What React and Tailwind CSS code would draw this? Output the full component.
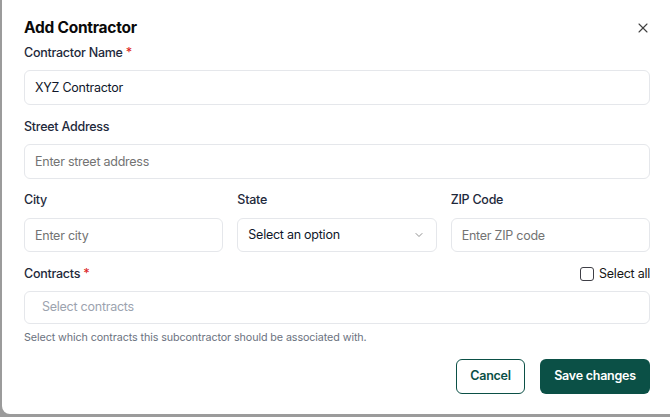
import { X, ChevronDown } from 'lucide-react';

const labelCls = 'block text-[12.5px] leading-5 font-medium tracking-[-0.25px] text-[#1e293b]';
const inputCls =
  'w-full rounded-md border border-[#e5e7eb] bg-white px-[10px] text-[12.5px] tracking-[-0.25px] text-[#0f172a] placeholder:text-[#737373] outline-none';

function Label({ children, required }) {
  return (
    <label className={labelCls}>
      {children}
      {required && <span className="text-[#dc2626]"> *</span>}
    </label>
  );
}

export default function App() {
  return (
    <div
      className="w-[670px] h-[417px] overflow-hidden bg-[#9b9b9b] pl-[2px]"
      style={{ fontFamily: 'Inter, "Noto Sans", sans-serif' }}
    >
      <div className="w-[668px] h-[414px] bg-white rounded-bl-lg pl-[22px] pr-[20px] pt-[14px]">
        {/* header */}
        <div className="flex items-center justify-between">
          <h2 className="text-[15.5px] leading-7 font-bold tracking-[-0.25px] text-[#0a0a0a]">Add Contractor</h2>
          <button className="mr-[-1px] text-[#404040]">
            <X size={16} strokeWidth={1.6} />
          </button>
        </div>

        {/* name */}
        <div className="mt-[1px]">
          <Label required>Contractor Name</Label>
          <input className={`${inputCls} mt-[7px] h-[35px]`} defaultValue="XYZ Contractor" />
        </div>

        {/* street */}
        <div className="mt-[12px]">
          <Label>Street Address</Label>
          <input className={`${inputCls} mt-[7px] h-[35px]`} placeholder="Enter street address" />
        </div>

        {/* city / state / zip */}
        <div className="mt-[11px] grid grid-cols-3 gap-x-[14px]">
          <div>
            <Label>City</Label>
            <input className={`${inputCls} mt-[8px] h-[34px]`} placeholder="Enter city" />
          </div>
          <div>
            <Label>State</Label>
            <div className="mt-[8px] h-[34px] rounded-md border border-[#e5e7eb] flex items-center justify-between pl-[10px] pr-[11px] text-[12.5px] tracking-[-0.25px] text-[#0f172a]">
              <span>Select an option</span>
              <ChevronDown size={12} strokeWidth={1.6} className="text-[#737373]" />
            </div>
          </div>
          <div>
            <Label>ZIP Code</Label>
            <input className={`${inputCls} mt-[8px] h-[34px]`} placeholder="Enter ZIP code" />
          </div>
        </div>

        {/* contracts */}
        <div className="mt-[12px]">
          <div className="flex items-center justify-between">
            <Label required>Contracts</Label>
            <label className="flex items-center gap-[5px] text-[12.5px] leading-5 tracking-[-0.25px] text-[#171717]">
              <span className="w-[14px] h-[14px] rounded-[3px] border border-[#3f3f46] bg-white" />
              Select all
            </label>
          </div>
          <div className="mt-[7px] h-[33px] rounded-md border border-[#e5e7eb] flex items-center pl-[17px] text-[12.5px] tracking-[-0.25px] text-[#9ca3af]">
            Select contracts
          </div>
          <p className="mt-[6px] text-[10.75px] leading-4 tracking-[-0.1px] text-[#6b7280]">
            Select which contracts this subcontractor should be associated with.
          </p>
        </div>

        {/* actions */}
        <div className="mt-[13px] flex justify-end gap-[15px]">
          <button className="h-[35px] w-[69px] rounded-md border border-[#0b5046] text-[12.5px] font-semibold tracking-[-0.25px] text-[#0b5046] bg-white">
            Cancel
          </button>
          <button className="h-[35px] w-[110px] rounded-md bg-[#0b5046] text-[12.5px] font-semibold tracking-[-0.25px] text-white">
            Save changes
          </button>
        </div>
      </div>
    </div>
  );
}
